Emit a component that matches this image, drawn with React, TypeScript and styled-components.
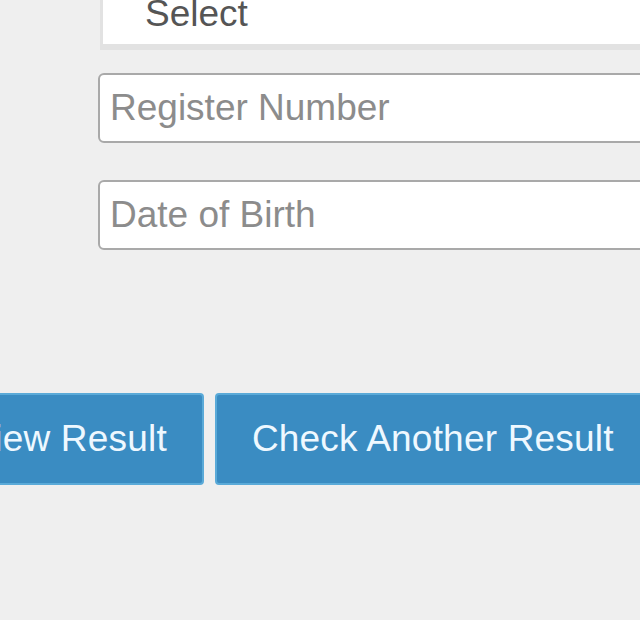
import styled, {createGlobalStyle} from "styled-components";

const GlobalStyle = createGlobalStyle`
  html, body {
    margin: 0;
    padding: 0;
    background: #efefef;
    overflow: hidden;
  }
  body {
    font-family: "Liberation Sans", Arial, sans-serif;
  }
`;

const Page = styled.div`
  width: 640px;
  height: 620px;
  overflow: hidden;
  background: #efefef;
`;

const Form = styled.div`
  display: flex;
  flex-direction: column;
  margin-top: -20px;
  padding-left: 98px;
`;

const SelectBox = styled.div`
  box-sizing: border-box;
  width: 620px;
  height: 70px;
  margin-left: 2px;
  background: #fff;
  border: 3px solid #e2e2e2;
  border-bottom-width: 6px;
  display: flex;
  align-items: center;
  padding-left: 42px;
  font-size: 37px;
  color: #555;
`;

const Field = styled.input<{ $gap: number }>`
  box-sizing: border-box;
  width: 620px;
  height: 70px;
  margin-top: ${(p) => p.$gap}px;
  padding: 0 10px;
  background: #fff;
  border: 2px solid #a9a9a9;
  border-radius: 6px;
  font-family: "Liberation Sans", Arial, sans-serif;
  font-size: 37px;
  color: #333;
  outline: none;

  &::placeholder {
    color: #8c8c8c;
  }
`;

const ButtonRow = styled.div`
  display: flex;
  gap: 11px;
  margin-top: 143px;
  margin-left: -67px;
`;

const Button = styled.button`
  flex: none;
  height: 92px;
  padding: 0 35px;
  background: #3a8cc2;
  border: 2px solid #5aaad8;
  border-radius: 4px;
  color: #eef8ff;
  font-family: "Liberation Sans", Arial, sans-serif;
  font-size: 37px;
  letter-spacing: 0.2px;
  white-space: nowrap;
  cursor: pointer;
`;

function App() {
    return (
        <Page>
            <GlobalStyle/>
            <Form>
                <SelectBox>Select</SelectBox>
                <Field $gap={23} type="text" placeholder="Register Number"/>
                <Field $gap={37} type="text" placeholder="Date of Birth"/>
            </Form>
            <ButtonRow>
                <Button>View Result</Button>
                <Button>Check Another Result</Button>
            </ButtonRow>
        </Page>
    );
}

export default App;
